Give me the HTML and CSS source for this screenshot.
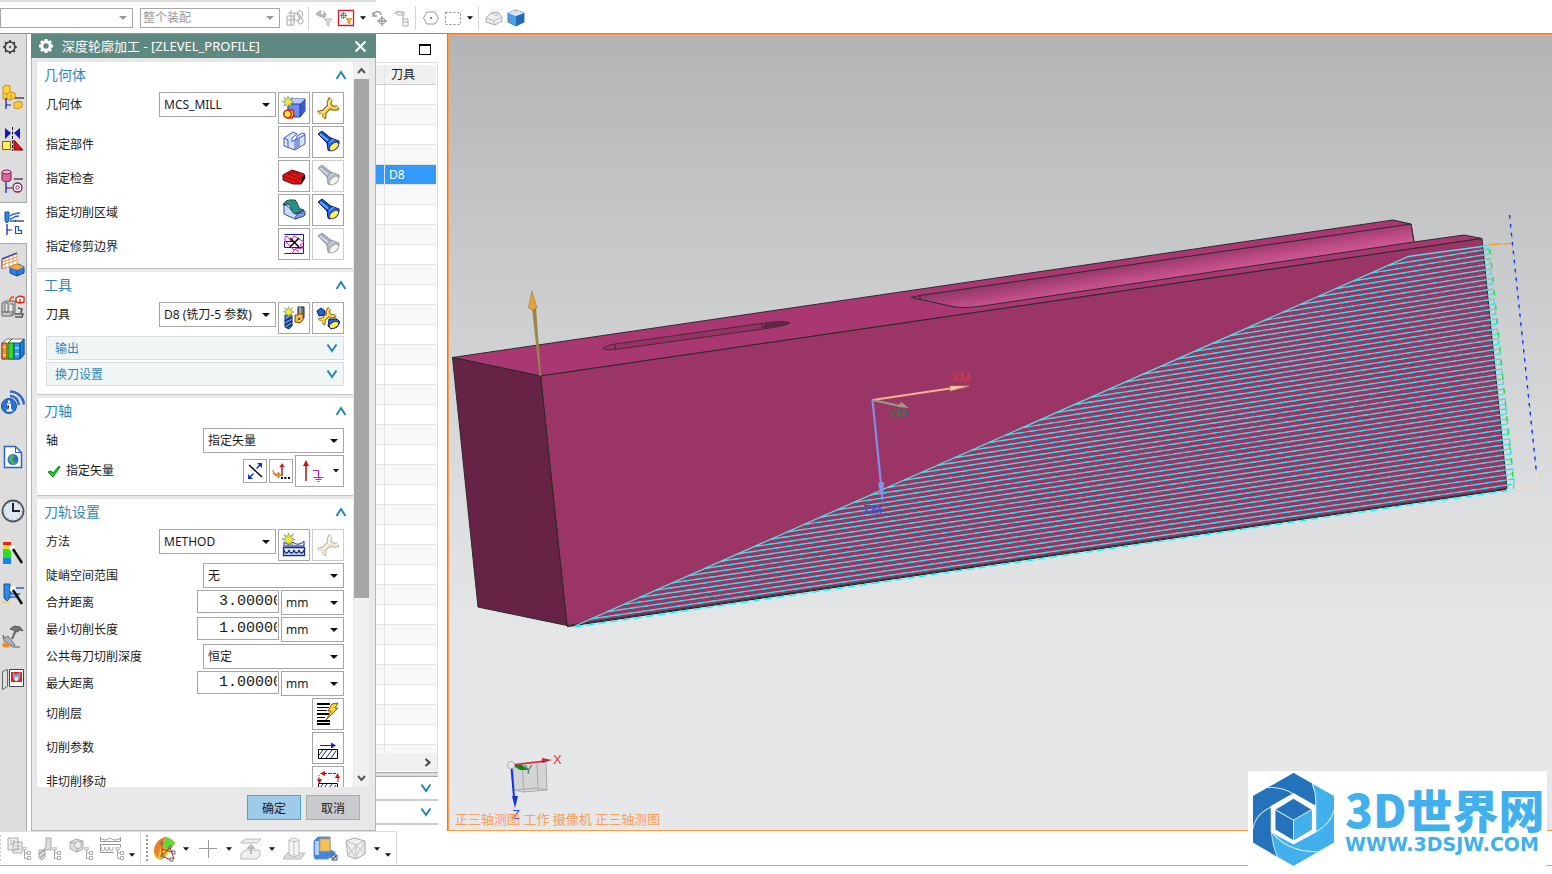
FILE: index.html
```
<!DOCTYPE html>
<html lang="zh-CN">

<head>
  <meta charset="UTF-8" />
  <meta name="viewport" content="width=device-width, initial-scale=1.0" />
  <title>深度轮廓加工</title>
  <link rel="stylesheet" href="styles.css">
</head>

<body>
  <!-- shared icons -->
  <svg class="defs" width="0" height="0">
    <symbol id="up" viewBox="0 0 12 10"><path d="M1.5 9 6 2l4.500 7" fill="none" stroke="#2587b8" stroke-width="2"/></symbol>
    <symbol id="down" viewBox="0 0 12 10"><path d="M1.500 1.500 6 8l4.500-6.500" fill="none" stroke="#2587b8" stroke-width="2"/></symbol>
    <symbol id="caret" viewBox="0 0 7 4"><path d="M0 0h7L3.500 4z" fill="#111"/></symbol>
    <symbol id="torch" viewBox="0 0 24 24">
      <path d="M2 4 6 1l10 8-4 5z" fill="#1750c4" stroke="#0a1a6a"/>
      <path d="M4 4l10 8" stroke="#69b4ff" stroke-width="2"/>
      <path d="M15 8l8 3v3l-9 7-2-1-1-7z" fill="#2469dd" stroke="#0a1a6a"/>
      <path d="M13 13l5-4" stroke="#7dc0ff"/>
      <ellipse cx="18" cy="16.500" rx="5.500" ry="3.200" transform="rotate(-40 18 16.500)" fill="#fff04a" stroke="#26307a"/>
    </symbol>
    <symbol id="wrench" viewBox="0 0 24 24">
      <g fill="none" stroke="#7a5a10">
        <path d="M6 18 14 10" stroke-width="5.500"/>
        <path d="M15 3a4.500 4.500 0 1 0 7 8" stroke-width="5"/>
        <path d="M2.500 17a3.500 3.500 0 1 1 5 5" stroke-width="4"/>
      </g>
      <g fill="none" stroke="#ffd33c">
        <path d="M6 18 14 10" stroke-width="3.500"/>
        <path d="M15 3.500a4.500 4.500 0 1 0 6.500 7.500" stroke-width="3"/>
        <path d="M3 17a3 3 0 1 1 4.500 4.500" stroke-width="2.200"/>
      </g>
      <path d="M6 17 13 10l-1-4 2-2" fill="none" stroke="#fff6b8"/>
    </symbol>
    <symbol id="spark" viewBox="0 0 12 12">
      <path d="M6 0l1 3.500L10.500 1 8.500 4.500 12 6 8.500 7.500 10 11 6.800 8.800 5.500 12 4.600 8.500 1.500 10 3.500 7 0 5.500 3.700 4.700 2 1.500 5 3.500z" fill="#ffe920" stroke="#3a7a9a" stroke-width=".5"/>
    </symbol>
    <symbol id="tree" viewBox="0 0 9 13"><path d="M1 0h3v3H1zM2.500 3v8.500H6M2.500 6H6M5.500 4.500h3v3h-3zM5.500 9.500h3v3h-3z" fill="#fff" stroke="#aaa"/></symbol>
  </svg>

  <header class="selbar">
    <select class="combo filter" aria-label="类型过滤器"><option></option></select>
    <select class="combo scope" aria-label="选择范围"><option>整个装配</option></select>
    <button class="tb" aria-label="装配"><svg width="18" height="18" viewBox="0 0 18 18" fill="none" stroke="#aaa"><path d="M5 1v16M2 4h7M1 7h7v9H1zM1 11h7"/><ellipse cx="11" cy="8" rx="3" ry="4"/><ellipse cx="14" cy="5" rx="2.500" ry="3.500"/><ellipse cx="14.500" cy="12" rx="2.500" ry="3"/></svg></button>
    <span class="sep"></span>
    <button class="tb" aria-label="重置过滤器"><svg width="18" height="18" viewBox="0 0 18 18"><path d="M6 1 1 5l5 3V6c4 0 4-2 2-4l3 3-1 3-3 1" fill="#bbb" stroke="#aaa"/><path d="M9 10h8l-3 3v4l-2-1v-3z" fill="#ddd" stroke="#bbb"/></svg></button>
    <button class="tb" aria-label="过滤器"><svg width="18" height="18" viewBox="0 0 18 18"><path d="M1.500 1.500h15v15h-15z" fill="#fff" stroke="#c8202c" stroke-width="1.300"/><path d="M6.500 3v7M3 6.500h7M4.500 4.500h4v4h-4z" fill="none" stroke="#766" stroke-width=".8"/><path d="M9 9.500h6l-2 2.500v3l-2-1v-2z" fill="#f7a823" stroke="#c8801a" stroke-width=".6"/></svg></button>
    <button class="more" aria-label="更多"><svg width="6" height="4"><use href="#caret"/></svg></button>
    <button class="tb" aria-label="旋转"><svg width="18" height="18" viewBox="0 0 18 18" fill="none" stroke="#999"><path d="M2 3v4h4M3 6c1-5 7-4 7 0M11 7v10M6 12h10" stroke-width="1.300"/><circle cx="11" cy="12" r="3"/></svg></button>
    <button class="tb" aria-label="选择对象"><svg width="18" height="18" viewBox="0 0 18 18" fill="none" stroke="#aaa"><path d="M1 5c3-4 6-3 9 0M4 3h7v3H4zM10 6v4M10 10h5v7h-5zM10 13h5"/></svg></button>
    <span class="sep"></span>
    <button class="tb" aria-label="捕捉点"><svg width="18" height="18" viewBox="0 0 18 18"><path d="M5 3h8l3.500 6L13 15H5L1.500 9z" fill="none" stroke="#999"/><circle cx="9" cy="9" r="1.200" fill="#888"/></svg></button>
    <button class="tb" aria-label="矩形选择"><svg width="18" height="18" viewBox="0 0 18 18"><path d="M1.500 3.500h15v12h-15z" fill="none" stroke="#888" stroke-dasharray="2 2"/></svg></button>
    <button class="more" aria-label="更多"><svg width="6" height="4"><use href="#caret"/></svg></button>
    <span class="sep"></span>
    <button class="tb" aria-label="隐藏边"><svg width="18" height="18" viewBox="0 0 18 18"><path d="M1 9l5-5 7-1 4 5v4l-7 4-9-3z" fill="#eee" stroke="#aaa"/><path d="M1 9l8 3 8-4M9 12v4M6 4l6 3 1-4" fill="none" stroke="#bbb"/></svg></button>
    <button class="tb" aria-label="着色"><svg width="18" height="18" viewBox="0 0 18 18"><path d="M1 4l8-3 8 3v9l-8 4-8-4z" fill="#4ba0e6" stroke="#3c7fc0"/><path d="M9 7l8-3v9l-8 4z" fill="#2468b8"/><path d="M1 4l8-3 8 3-8 3z" fill="#d7ecff"/><path d="M9 1v3M1 13l5-3" stroke="#e06a5a" stroke-dasharray="1 1"/></svg></button>
  </header>

  <main>
    <nav class="resbar">
      <button class="res gearbtn" aria-label="资源条选项"><svg width="16" height="16" viewBox="0 0 16 16"><circle cx="8" cy="8" r="5" fill="none" stroke="#333" stroke-width="1.500"/><circle cx="8" cy="8" r="1" fill="#333"/><path d="M8 1v2M8 13v2M1 8h2M13 8h2M3 3l1.500 1.500M11.500 11.500 13 13M3 13l1.500-1.500M11.500 4.500 13 3" stroke="#333" stroke-width="1.500"/></svg></button>
      <button class="res" aria-label="装配导航器"><svg width="26" height="26" viewBox="0 0 26 26"><path d="M3 3l3-2 4 1v6l5 1v5l-4 2-8-1z" fill="#ffd23a" stroke="#c8901c"/><path d="M3 9l4 1v5M7 10l3-2M11 10v5" fill="none" stroke="#c8901c"/><path d="M6 14v11M6 21h5" stroke="#1414b0" stroke-width="1.200"/><path d="M15 14h9" stroke="#000"/><path d="M14 19l4-2 4 1v5l-4 2-4-1z" fill="#ffc83a" stroke="#c8901c"/></svg></button>
      <button class="res" aria-label="约束导航器"><svg width="26" height="26" viewBox="0 0 26 26"><path d="M5 2v11l6-6zM20 2v11l-6-6z" fill="#1414c8"/><path d="M12.500 1v24" stroke="#111" stroke-dasharray="3 1.500"/><path d="M2.500 15.500h8v8h-8z" fill="#ffee58" stroke="#806010"/><path d="M14 24V14l9 10z" fill="#d8141c" stroke="#7a0a0a"/></svg></button>
      <button class="res" aria-label="部件导航器"><svg width="26" height="26" viewBox="0 0 26 26"><path d="M2 4v8c1 2 8 2 9 0V4z" fill="#d86a9a" stroke="#802050"/><ellipse cx="6.500" cy="4" rx="4.500" ry="2" fill="#f0b0cc" stroke="#802050"/><path d="M6 14v11M6 20h6" stroke="#1414b0" stroke-width="1.200"/><path d="M14 11h9" stroke="#000"/><circle cx="17.500" cy="19.500" r="4.500" fill="#fff" stroke="#8a1c4c" stroke-width="1.300"/><circle cx="17.500" cy="19.500" r="1.700" fill="none" stroke="#8a1c4c"/></svg></button>
      <button class="res current" aria-label="工序导航器"><svg width="26" height="26" viewBox="0 0 26 26"><path d="M4 2h4v9l-2 2-2-2z" fill="#2c8ae0" stroke="#1450a0"/><path d="M9 9c4 0 2-3 9-3M9 6c4-3 4-2 10-3M9 11h6" fill="none" stroke="#2a64c8" stroke-width="1.300"/><path d="M6 14v11M6 20h5" stroke="#1414b0" stroke-width="1.200"/><path d="M14 11h9" stroke="#000"/><path d="M14.500 16.500h3v4h3v3h-6z" fill="#fff" stroke="#1a50c0" stroke-width="1.200"/></svg></button>
      <button class="res" aria-label="加工特征导航器"><svg width="26" height="26" viewBox="0 0 26 26"><path d="M2 7l15-6v11L2 17z" fill="#fff" stroke="#e0a860"/><path d="M2 10l15-5M2 13l15-5M5 6v11M9 4v12M13 3v11" stroke="#e89a48"/><path d="M2 7l15-6" stroke="#4040c0" stroke-width="1.500"/><path d="M2 17V7" stroke="#7a50a0"/><path d="M10 15l8-3 6 3v6l-7 3-7-3z" fill="#2c7ce8" stroke="#174a9a"/><path d="M9 15l8-3 7 3-7 3z" fill="#ffa830"/><path d="M17 18v6" stroke="#174a9a"/></svg></button>
      <button class="res" aria-label="机床导航器"><svg width="26" height="26" viewBox="0 0 26 26"><path d="M2 9l4-2h9v13l-3 2H2z" fill="#c8c8c8" stroke="#666"/><path d="M5 9v9h3V9zM10 10h3v10h-3M2 18h12" fill="#eee" stroke="#666"/><path d="M15 20h8l-1 3h-7M18 14l4 1-1 4" fill="none" stroke="#555" stroke-width="1.500"/><path d="M16 4l4-2 4 1v5l-4 1-4-1zM20 5v4" fill="#fff" stroke="#d82018" stroke-width="1.300"/><path d="M14 3c-4 0-4 2-4 5" fill="none" stroke="#e86020" stroke-width="1.800"/></svg></button>
      <button class="res" aria-label="重用库"><svg width="26" height="26" viewBox="0 0 26 26"><path d="M2 7l5-4h17v16l-5 4H2z" fill="#fff" stroke="#777"/><path d="M2 7h5v16H2z" fill="#e89030" stroke="#7a4510"/><path d="M8 7h6v16H8zM8 7l4-4" fill="#3ad030" stroke="#117010"/><path d="M14 7h6v16h-6z" fill="#2c9ae8" stroke="#0d5090"/><path d="M20 7l4-4v16l-4 4z" fill="#1a80e0" stroke="#0d5090"/><path d="M3 11h3M15 12h4M3 19h3M15 18h4" stroke="#fff"/></svg></button>
      <button class="res spaced" aria-label="HD3D 工具"><svg width="26" height="26" viewBox="0 0 26 26"><path d="M10 6c5 0 8 3 9 9M10 1.500c7 0 13 5 14 13" fill="none" stroke="#3468c8" stroke-width="2.500"/><circle cx="9" cy="16" r="7.500" fill="#2a74d8" stroke="#184a98"/><path d="M9 10.500v2.500M7 14.500h3V20M6.500 20.500h6" stroke="#fff" stroke-width="2"/></svg></button>
      <button class="res spaced" aria-label="浏览器"><svg width="26" height="26" viewBox="0 0 26 26"><path d="M4.500 2.500h11l6 6v15h-17z" fill="#fff" stroke="#2a64c8" stroke-width="1.500"/><path d="M15.500 2.500v6h6" fill="none" stroke="#2a64c8"/><circle cx="13" cy="15.500" r="5.500" fill="#2a74c8"/><path d="M9 13c2-4 6-2 5 0s-2 2-1 4 3 0 4 1l-3 3c-2-1-3-3-5-4z" fill="#52b052"/></svg></button>
      <button class="res spaced" aria-label="历史记录"><svg width="26" height="26" viewBox="0 0 26 26"><circle cx="13" cy="13" r="10.500" fill="#dce8f4" stroke="#555" stroke-width="1.800"/><circle cx="13" cy="13" r="8.500" fill="none" stroke="#8aa" stroke-dasharray="1 3.450"/><path d="M13 5v8h7" fill="none" stroke="#223" stroke-width="2"/></svg></button>
      <button class="res" aria-label="系统材料"><svg width="26" height="26" viewBox="0 0 26 26"><path d="M3 2h8v5H3z" fill="#f02018"/><path d="M3 5h8v4H3z" fill="#ffd820"/><path d="M3 9h8v9H3z" fill="#28e020"/><path d="M3 18h8v6H3z" fill="#1880f0"/><circle cx="12" cy="8" r="3" fill="#fff"/><path d="M13 9l9 14" stroke="#111" stroke-width="2.500"/></svg></button>
      <button class="res" aria-label="加工向导"><svg width="26" height="26" viewBox="0 0 26 26"><path d="M4 2h6v14l-3 3-3-3z" fill="#2c8ae0" stroke="#1450a0"/><path d="M24 6H14l-4 6h9l-3 3H8" fill="none" stroke="#2a64c8" stroke-width="1.500"/><circle cx="13" cy="7" r="3" fill="#fff"/><path d="M13 8l9 14" stroke="#111" stroke-width="2.500"/><path d="M2 20h7" stroke="#f0d020" stroke-width="2" stroke-dasharray="2 1"/></svg></button>
      <button class="res" aria-label="工具"><svg width="26" height="26" viewBox="0 0 26 26"><path d="M10 5l4-3 6 1 3 4-3-1-3 2-4-2z" fill="#777" stroke="#444" stroke-width=".8"/><path d="M16 6l-4 9" stroke="#666" stroke-width="2"/><path d="M3 11l2 3 3-2 3 4 4 5-2 2-5-4-4-2z" fill="#aab4c0" stroke="#555" stroke-width=".8"/><ellipse cx="6" cy="21" rx="4" ry="2.500" fill="#f09020"/><path d="M10 21l4 2h6" stroke="#999" stroke-width="2" fill="none"/></svg></button>
      <button class="res" aria-label="角色"><svg width="26" height="26" viewBox="0 0 26 26"><path d="M2.500 5.500l5-2v17l-5 3z" fill="#ddd" stroke="#666"/><path d="M9.500 3.500h14v17h-14z" fill="#fff" stroke="#444"/><path d="M11 6h11v10H11z" fill="#e82020"/><path d="M13 6l3 3 4-3v6c-3 4-5 4-7 0z" fill="#58b0f0"/><circle cx="16.500" cy="13" r="2" fill="#ffe0c0"/></svg></button>
    </nav>

    <form class="dialog" onsubmit="return false">
      <div class="titlebar">
        <svg width="18" height="18" viewBox="0 0 18 18"><circle cx="9" cy="9" r="4.200" fill="none" stroke="#fff" stroke-width="3"/><path d="M9 2v2M9 14v2M2 9h2M14 9h2M4 4l1.500 1.500M12.500 12.500 14 14M4 14l1.500-1.500M12.500 5.500 14 4" stroke="#fff" stroke-width="3"/></svg>
        <h1>深度轮廓加工 - [ZLEVEL_PROFILE]</h1>
        <button class="close" aria-label="关闭"><svg width="13" height="13" viewBox="0 0 13 13"><path d="M1.500 1.500l10 10M11.500 1.500l-10 10" stroke="#fff" stroke-width="2"/></svg></button>
      </div>

      <div class="body">
        <div class="groups">
          <section>
            <h2>几何体 <svg width="12" height="10"><use href="#up"/></svg></h2>
            <div class="row">
              <label for="geometry">几何体</label>
              <select id="geometry" class="combo mid-size"><option>MCS_MILL</option></select>
              <button class="ib" aria-label="新建几何体"><svg width="24" height="24" viewBox="0 0 24 24"><path d="M6 8l4-5h13v12l-5 6H6z" fill="#6f8df0" stroke="#2038a0"/><path d="M6 8h12l5-5H10z" fill="#b8ccff"/><path d="M18 8l5-5v12l-5 6z" fill="#3c58d0"/><path d="M6 8h12v13" fill="none" stroke="#2038a0"/><path d="M5 14h6l1 5-2 3H5" fill="#ffe020" stroke="#e02010" stroke-width="1.500"/><circle cx="5.500" cy="18" r="3.800" fill="#ffe83a" stroke="#e02010" stroke-width="1.500"/><use href="#spark" width="12" height="12"/></svg></button>
              <button class="ib" aria-label="编辑几何体"><svg width="24" height="24"><use href="#wrench"/></svg></button>
            </div>
            <div class="row low">
              <label for="part">指定部件</label>
              <button class="ib" id="part"><svg width="24" height="24" viewBox="0 0 24 24"><path d="M2 8l9-6 4 2-5 4v4l5-4V6l5-3 3 1v10l-10 6L2 16z" fill="#d5e4ff" stroke="#4a58c0"/><path d="M2 8l4 2v7M13 10l10-5M13 10v10M17 8v9" fill="none" stroke="#4a58c0"/><path d="M14 10l3-2v9l-3 2z" fill="#8898d8"/></svg></button>
              <button class="ib" aria-label="显示部件"><svg width="24" height="24"><use href="#torch"/></svg></button>
            </div>
            <div class="row low">
              <label for="check">指定检查</label>
              <button class="ib" id="check"><svg width="24" height="24" viewBox="0 0 24 24"><path d="M1 11l9-5 12 4 1 4-4 6-8 0-10-4z" fill="#e01414" stroke="#5a0404"/><path d="M1 12l11 4 11-4M12 16l7 4M6 10l5-2 6 2-4 3z" fill="none" stroke="#8a0808" stroke-width=".8"/><path d="M20 13l3-2v3l-4 6z" fill="#300"/></svg></button>
              <button class="ib" aria-label="显示检查" disabled><svg width="24" height="24"><use href="#torch"/></svg></button>
            </div>
            <div class="row low">
              <label for="area">指定切削区域</label>
              <button class="ib" id="area"><svg width="24" height="24" viewBox="0 0 24 24"><path d="M2 7v9l11 5 10-4v-4l-9 3-10-9z" fill="#c8daff" stroke="#3848a8"/><path d="M1 7c3-6 7-5 12-5 4 4 2 9 9 10l-9 4c-5-2-3-9-8-10z" fill="#2a9088" stroke="#0c4844"/><path d="M13 21c0-4 6-8 10-5l-1 2z" fill="#88a0e8" stroke="#3848a8"/></svg></button>
              <button class="ib" aria-label="显示切削区域"><svg width="24" height="24"><use href="#torch"/></svg></button>
            </div>
            <div class="row low">
              <label for="trim">指定修剪边界</label>
              <button class="ib" id="trim"><svg width="24" height="24" viewBox="0 0 24 24" fill="none"><path d="M2.500 2.500h19v19h-19M21.500 15.500h-19v-6h9" stroke="#1414b8"/><path d="M3 5l2-1 4 5 3-5 10 6-4 3 4 3-9 1-3 5M3 5v4l9 9M13 17l4 3" stroke="#d020c8"/><path d="M8 6l9 9M17 6l-9 9" stroke="#000" stroke-width="1.500"/></svg></button>
              <button class="ib" aria-label="显示修剪边界" disabled><svg width="24" height="24"><use href="#torch"/></svg></button>
            </div>
          </section>

          <section>
            <h2>工具 <svg width="12" height="10"><use href="#up"/></svg></h2>
            <div class="row">
              <label for="tool">刀具</label>
              <select id="tool" class="combo mid-size"><option>D8 (铣刀-5 参数)</option></select>
              <button class="ib" aria-label="新建刀具"><svg width="24" height="24" viewBox="0 0 24 24"><path d="M3 9h7v11l-3 3-4-2z" fill="#5c98e8" stroke="#16286a"/><path d="M3 15l7-4M3 19l7-4M5 22l5-4" stroke="#16286a" stroke-width="1.500"/><path d="M16 1h6v11h-6z" fill="#777" stroke="#222"/><path d="M18 1v10" stroke="#ddd"/><path d="M13 9h3v-1h5v6l-3 3-5-1z" fill="#f2c040" stroke="#7a4a10"/><circle cx="17" cy="13" r="1" fill="#400"/><use href="#spark" x="1" width="11" height="12"/></svg></button>
              <button class="ib" aria-label="编辑刀具"><svg width="24" height="24" viewBox="0 0 24 24"><path d="M1 5l4-3 4 3v4l-6 1z" fill="#2463d0" stroke="#0a1a6a"/><use href="#wrench" width="22" height="20"/><path d="M13 13l8 0 3 3-3 5-6 2-3-3z" fill="#2463d0" stroke="#0a1a6a"/><ellipse cx="18" cy="19" rx="5" ry="3" transform="rotate(-25 18 19)" fill="#ffec40" stroke="#26307a"/></svg></button>
            </div>
            <button class="subgroup">输出 <svg width="12" height="10"><use href="#down"/></svg></button>
            <button class="subgroup">换刀设置 <svg width="12" height="10"><use href="#down"/></svg></button>
          </section>

          <section>
            <h2>刀轴 <svg width="12" height="10"><use href="#up"/></svg></h2>
            <div class="row">
              <label for="axis">轴</label>
              <select id="axis" class="combo wide"><option>指定矢量</option></select>
            </div>
            <div class="row mid">
              <svg class="tick" width="14" height="14" viewBox="0 0 14 14"><path d="M1 8l3-1 2 2 6-7 1 1-7 10z" fill="#1ed02a" stroke="#0a8014"/></svg>
              <label for="vector">指定矢量</label>
              <button class="ib small" aria-label="反向"><svg width="18" height="18" viewBox="0 0 18 18"><path d="M3 3l13 12" stroke="#000" stroke-width="1.400"/><path d="M2 17v-5l2 2 3-3 1 1-3 3 2 2zM16 1v5l-2-2-3 3-1-1 3-3-2-2z" fill="#1430d0"/></svg></button>
              <button class="ib small" aria-label="矢量对话框"><svg width="18" height="18" viewBox="0 0 18 18"><path d="M10 14V4" stroke="#a01818" stroke-width="1.400"/><path d="M10 1l2.500 4h-5z" fill="#d01818"/><path d="M1 8c1 4 3 4 5 4v-2l3 3-3 3v-2c-4 0-5-2-5-6z" fill="#f09020" stroke="#a05808" stroke-width=".5"/><path d="M9 16h2M12.500 16h2M16 16h2" stroke="#000" stroke-width="2"/></svg></button>
              <button class="ib vector" id="vector"><svg width="40" height="24" viewBox="0 0 40 24"><path d="M6 22V4" stroke="#a01818" stroke-width="1.500"/><path d="M6 1l3 6H3z" fill="#d01010"/><path d="M13 11.500h5.500v8M13.500 18.500h10M15.500 20.500h6M17.500 22.500h2" fill="none" stroke="#c01cc8"/><path d="M33 10h6l-3 3.500z" fill="#111"/></svg></button>
            </div>
          </section>

          <section>
            <h2>刀轨设置 <svg width="12" height="10"><use href="#up"/></svg></h2>
            <div class="row">
              <label for="method">方法</label>
              <select id="method" class="combo mid-size"><option>METHOD</option></select>
              <button class="ib" aria-label="新建方法"><svg width="24" height="24" viewBox="0 0 24 24"><path d="M2 13V9c4 3 6 3 9 0 3 3 7 3 11-1v5z" fill="#d8ecff" stroke="#1a2a8a"/><path d="M1.500 14.500h21v8h-21z" fill="#e4f2ff" stroke="#1a2a8a" stroke-width="1.300"/><path d="M2 17c1 4 4 4 5 0 1 4 4 4 5 0 1 4 4 4 5 0 1 4 4 4 5 0" fill="none" stroke="#1a2a8a" stroke-width="1.300"/><use href="#spark" width="13" height="13"/></svg></button>
              <button class="ib" aria-label="编辑方法" disabled><svg width="24" height="24"><use href="#wrench"/></svg></button>
            </div>
            <div class="row">
              <label for="steep">陡峭空间范围</label>
              <select id="steep" class="combo wide"><option>无</option></select>
            </div>
            <div class="row">
              <label for="merge">合并距离</label>
              <input id="merge" type="text" value="3.00000">
              <select class="combo unit" aria-label="单位"><option>mm</option></select>
            </div>
            <div class="row">
              <label for="mincut">最小切削长度</label>
              <input id="mincut" type="text" value="1.00000">
              <select class="combo unit" aria-label="单位"><option>mm</option></select>
            </div>
            <div class="row">
              <label for="depth">公共每刀切削深度</label>
              <select id="depth" class="combo wide"><option>恒定</option></select>
            </div>
            <div class="row">
              <label for="maxdist">最大距离</label>
              <input id="maxdist" type="text" value="1.00000">
              <select class="combo unit" aria-label="单位"><option>mm</option></select>
            </div>
            <div class="row mid">
              <label for="levels">切削层</label>
              <button class="ib" id="levels"><svg width="24" height="24" viewBox="0 0 24 24"><path d="M1 2h13M1 12h12M1 19h13M1 22h13" stroke="#000" stroke-width="2"/><path d="M1 5.500h12M1 8.500h10M1 15.500h8" stroke="#000"/><path d="M16 2l6-1-3 5h3L10 18l5-9h-3z" fill="#ffd030" stroke="#80601a"/></svg></button>
            </div>
            <div class="row mid">
              <label for="cutting">切削参数</label>
              <button class="ib" id="cutting"><svg width="24" height="24" viewBox="0 0 24 24"><path d="M4 9.500h12" stroke="#1420c8"/><path d="M15 6.500l5 3-5 3z" fill="#1420c8"/><path d="M2.500 13.500h19v9h-19z" fill="#fff" stroke="#000"/><path d="M3 19l4-5M5 22l6-8M10 22l6-8M15 22l5-7" stroke="#222a60"/></svg></button>
            </div>
            <div class="row mid">
              <label for="noncutting">非切削移动</label>
              <button class="ib" id="noncutting"><svg width="24" height="24" viewBox="0 0 24 24"><path d="M3 11V5M7 3.500h13M22 12V6" stroke="#d01010" stroke-dasharray="4 1"/><path d="M1 9h5l-2.500 5zM4 3.500l5-2.500v5zM19 8h5l-2.500-5z" fill="#d01010"/><path d="M2.500 13.500h19v9h-19z" fill="#fff" stroke="#000"/><path d="M3 19l4-5M5 22l6-8M10 22l6-8M15 22l5-7" stroke="#222a60"/></svg></button>
            </div>
          </section>
        </div>
        <div class="scrollbar">
          <svg width="15" height="17" viewBox="0 0 15 17"><path d="M4 11l3.500-4 3.500 4" fill="none" stroke="#555" stroke-width="2"/></svg>
          <div class="thumb"></div>
          <svg width="15" height="17" viewBox="0 0 15 17"><path d="M4 6l3.500 4L11 6" fill="none" stroke="#555" stroke-width="2"/></svg>
        </div>
      </div>

      <div class="actions">
        <button class="ok">确定</button>
        <button>取消</button>
      </div>
    </form>

    <aside class="navigator">
      <button class="maximize" aria-label="最大化"></button>
      <div class="tablebox">
        <table>
          <thead><tr><th></th><th>刀具</th></tr></thead>
          <tbody id="ops"></tbody>
        </table>
      </div>
      <div class="hscroll"><svg width="8" height="9" viewBox="0 0 8 9"><path d="M1.500 1l4 3.500-4 3.500" fill="none" stroke="#444" stroke-width="2"/></svg></div>
      <div class="splitter"></div>
      <button class="pane" aria-label="相关性"><svg width="12" height="10"><use href="#down"/></svg></button>
      <button class="pane" aria-label="细节"><svg width="12" height="10"><use href="#down"/></svg></button>
    </aside>

    <div class="viewport">
      <svg class="scene" viewBox="449 35 1103 795" preserveAspectRatio="xMinYMin">
        <defs>
          <linearGradient id="channel" gradientUnits="userSpaceOnUse" x1="1160" y1="259" x2="1164" y2="284">
            <stop offset="0" stop-color="#96386a"/>
            <stop offset=".6" stop-color="#c04d86"/>
            <stop offset="1" stop-color="#d75c98"/>
          </linearGradient>
        </defs>
        <!-- workpiece -->
        <g stroke="#2b2b2b" stroke-linejoin="round">
          <path d="M452.500 357.500 1393 220l18 4 3 18 50-7 18 3.500L540.500 376z" fill="#a93771"/>
          <path d="M540.500 376 1482 238.500 1507 488.500 567 625.500z" fill="#9b3566"/>
          <path d="M452.500 357.500 540.500 376 567 625.500 478 607z" fill="#662345"/>
          <path d="M911 297.500l9-2L1411 224l3 18L979 306.500q-14 2-24 .5z" fill="url(#channel)"/>
          <path d="M920 295.500v4" fill="none"/>
          <path d="M603 348q4-3 12-4l150-21q20-3 25 0-4 3-27 6L615 349.500q-12 1-12-1.500z" fill="#963364" stroke-width=".8"/>
          <path d="M765 323q20-3 25 0-4 3-28 6z" fill="#612544" stroke="none"/>
          <path d="M615 344v5.500M762 323.500v5" fill="none"/>
        </g>
        <path d="M567 626.500 1506 489.500" stroke="#2b2b2b" stroke-width="1.500"/>
        <!-- tool path, filled in by the script -->
        <path id="passes" fill="none" stroke="#6fcdd2" stroke-width="1.200"/>
        <path id="passes-dash" fill="none" stroke="#00f4f8" stroke-width="1.200" stroke-dasharray="6 6"/>
        <path d="M575 626 1408.500 256.500 1489 245.500" fill="none" stroke="#55dfe4" stroke-width="1.300"/>
        <path d="M575 627 1513 490" stroke="#a8f2f4" stroke-width="2"/>
        <path d="M575 627 1513 490" stroke="#00f0f4" stroke-dasharray="7 5"/>
        <path d="M1490 249 1514 489" stroke="#22e030" stroke-width="1.300" stroke-dasharray="5 9"/>
        <path d="M1489 244.500 1512 243.500" stroke="#ffa01e" stroke-width="1.500" stroke-dasharray="12 2"/>
        <path d="M1509.500 215 1536.500 473" stroke="#8296f0" stroke-width="1.300" stroke-dasharray="5 4"/>
        <path d="M1509.500 215 1536.500 473" stroke="#1430e0" stroke-width="1.300" stroke-dasharray="3 6"/>
        <path d="M1537 474v14h-23" fill="none" stroke="#f4dcd4" stroke-width="1.300" stroke-dasharray="8 2"/>
        <!-- tool axis -->
        <path d="M539.500 376 532 308h4l5 68z" fill="#9c8740"/>
        <path d="M532 291l-3.500 17 4 2 4.500-2z" fill="#e8a23c" stroke="#8a6a28" stroke-width=".5"/>
        <!-- MCS -->
        <path d="M872.500 400 950 388.500" stroke="#f4b090" stroke-width="2"/>
        <path d="M969 386l-19 0v5z" fill="#f4c8a0" stroke="#d08a70" stroke-width=".6"/>
        <path d="M872.500 400 900 406" stroke="#93a183" stroke-width="2"/>
        <path d="M909 408l-8-6-3 5z" fill="#93a183"/>
        <path d="M872.500 400 881 484" stroke="#7f90e6" stroke-width="2.200"/>
        <path d="M882.500 502l-4.500-19 6-1z" fill="#7d98f2"/>
        <text x="951" y="382" class="axis red">XM</text>
        <text x="888" y="418" class="axis green">YM</text>
        <text x="863" y="514" class="axis blue">ZM</text>
        <!-- view triad -->
        <path d="M513 766l9-2 24-2 1 28-24 2-9-2zM522 764l2 28M537 763l1 27M514 790l23-2 10 2" fill="#cbccce" fill-opacity=".7" stroke="#aaa"/>
        <path d="M511 765 545 761" stroke="#d02830" stroke-width="1.500"/>
        <path d="M552 760l-10-2v5z" fill="#c02830"/>
        <path d="M512 765l10 0 7 5-9 0z" fill="#168018"/>
        <path d="M511.500 768 514 797" stroke="#1430e0" stroke-width="2"/>
        <path d="M515 808l-3-12h6z" fill="#1430e0"/>
        <circle cx="511" cy="765" r="3.800" fill="#e4e4e4" stroke="#999" stroke-width=".6"/>
        <text x="553" y="764" class="axis red">X</text>
        <text x="524" y="774" class="axis dim">Y</text>
        <text x="512" y="819" class="axis blue">Z</text>
      </svg>
      <p class="viewname">正三轴测图 工作 摄像机 正三轴测图</p>
    </div>
  </main>

  <footer class="bottombar">
    <div class="strip">
      <span class="grip"></span>
      <button class="bb" aria-label="创建程序"><svg width="26" height="26" viewBox="0 0 26 26"><path d="M2 2h10v12H2zM7 6h9v11H7z" fill="#eee" stroke="#aaa"/><path d="M4 5h6M4 8h6M9 10h5M9 13h5" stroke="#aaa" stroke-dasharray="2 1"/><use href="#tree" x="16" y="11" width="9" height="13"/></svg></button>
      <button class="bb" aria-label="创建刀具"><svg width="26" height="26" viewBox="0 0 26 26"><path d="M9 2h5v12H7l2-4zM2 14h6v7l-3 3-3-2z" fill="#ddd" stroke="#aaa"/><path d="M2 18l6-4M3 22l5-4" stroke="#888"/><use href="#tree" x="15" y="11" width="9" height="13"/></svg></button>
      <button class="bb" aria-label="创建几何体"><svg width="26" height="26" viewBox="0 0 26 26"><path d="M2 6l6-3 7 2v8l-6 3-7-3z" fill="#ddd" stroke="#aaa"/><path d="M2 6l7 2v8M9 8l6-3" fill="none" stroke="#aaa"/><circle cx="10" cy="9" r="3.500" fill="#eee" stroke="#aaa"/><use href="#tree" x="16" y="11" width="9" height="13"/></svg></button>
      <button class="bb" aria-label="创建方法"><svg width="26" height="26" viewBox="0 0 26 26" fill="none" stroke="#999"><path d="M1.500 1v4.500h20V1M1 2q5 4 10 0 5 4 11 0M1.500 8.500v8h13M1 8.500h20.500v3M2 11c1 5 4 5 4 0 1 5 4 5 4 0 1 5 4 5 4 0"/><use href="#tree" x="16" y="11" width="9" height="13"/></svg></button>
      <button class="last" aria-label="工具条选项"><svg width="6" height="4"><use href="#caret"/></svg></button>
      <span class="rule"></span>
      <span class="grip dark"></span>
      <button class="bb" aria-label="分析"><svg width="26" height="26" viewBox="0 0 26 26"><path d="M2 16C2 8 7 2 14 1c4 1 7 3 9 6l-8 12-5 5c-5 0-8-3-8-8z" fill="#f0c030"/><path d="M2 16C2 8 7 2 14 1l-6 12-2 9z" fill="#e88030"/><path d="M14 1c4 1 7 3 9 6l-6 8-6-4z" fill="#60d83a"/><path d="M10 7v13l8-9 4 12M10 13l10 3M10 20l9 4" fill="none" stroke="#c02818"/><path d="M9 6h2v2H9zM9 19h2v2H9zM20 15h3v3h-3zM18 22h3v3h-3zM17 10h2v2h-2z" fill="#fff" stroke="#444" stroke-width=".8"/></svg></button>
      <button class="more" aria-label="更多"><svg width="6" height="4"><use href="#caret"/></svg></button>
      <button class="bb" aria-label="点"><svg width="26" height="26" viewBox="0 0 26 26"><path d="M13.500 4v18M4 12.500h18" stroke="#999"/></svg></button>
      <button class="more" aria-label="更多"><svg width="6" height="4"><use href="#caret"/></svg></button>
      <button class="bb" aria-label="基准平面"><svg width="26" height="26" viewBox="0 0 26 26"><path d="M3 6l5-3h15l-4 4H3zM3 17l5-3h13l1 2v4l-4 3H3z" fill="#eee" stroke="#bbb"/><path d="M13 18v-6h-3l3-3 3 3h-3" fill="none" stroke="#aaa" stroke-width="1.300"/></svg></button>
      <button class="more" aria-label="更多"><svg width="6" height="4"><use href="#caret"/></svg></button>
      <button class="bb" aria-label="拉伸"><svg width="26" height="26" viewBox="0 0 26 26"><path d="M2 23l4-6h18l-4 6z" fill="#ddd" stroke="#bbb"/><path d="M8 4v15q5 3 10 0V4q-5-4-10 0z" fill="#f4f4f4" stroke="#bbb"/><path d="M8 4q5 3 10 0M13 5v16" fill="none" stroke="#aaa" stroke-dasharray="2 1"/></svg></button>
      <button class="bb" aria-label="包容体"><svg width="26" height="26" viewBox="0 0 26 26"><path d="M2 5l4-4h12v13l5 2v3l-8 4H3l-1-3z" fill="#3f86dc" stroke="#5a90d0"/><path d="M3 5h4v14H3z" fill="#a8d0f8"/><path d="M8 3h10v12H8z" fill="#f8c058" stroke="#d8a050"/><path d="M20 19h5v5h-5z" fill="#fff" stroke="#3a4880"/><path d="M21 23l3-3" stroke="#3a4880" stroke-width="1.500"/></svg></button>
      <button class="bb" aria-label="小平面体"><svg width="26" height="26" viewBox="0 0 26 26"><path d="M3 5l8-3 11 3v13l-9 5-8-3z" fill="#eee" stroke="#aaa"/><path d="M3 5l10 4 9-4M13 9v14M4 8l9 14M5 19l8-9M13 20l9-13M14 10l8 8" fill="none" stroke="#bbb"/></svg></button>
      <button class="more" aria-label="更多"><svg width="6" height="4"><use href="#caret"/></svg></button>
      <button class="last" aria-label="工具条选项"><svg width="6" height="4"><use href="#caret"/></svg></button>
    </div>
  </footer>

  <div class="brand">
    <svg width="81" height="93" viewBox="39 39 242 278">
      <path d="M160 39 281 108V247L160 317 39 247V108z" fill="#41b0ec"/>
      <path d="M160 39 216 71Q228 100 225 138L160 178 97 222Q97 262 113 290L39 247V108z" fill="#2472bb"/>
      <path d="M160 99 228 138V216L160 253 92 216V138z" fill="#fff"/>
      <path d="M106 149 160 116 214 149V208L160 240 106 208z" fill="#2472bb"/>
      <path d="M160 180 214 149V208L160 240z" fill="#41b0ec"/>
      <path d="M106 149 160 180 214 149M160 180V240M84 83Q122 78 163 103M94 140Q46 162 39 205M226 216Q272 190 281 150M97 218Q145 276 232 274M216 71Q230 105 226 140M94 214Q98 262 113 290" fill="none" stroke="#cfe8fa" stroke-width="3"/>
    </svg>
    <div class="brand-text">
      <strong>3D世界网</strong>
      <span>WWW.3DSJW.COM</span>
    </div>
  </div>

  <script src="main.js"></script>
</body>

</html>
```
FILE: styles.css
```
* {
  box-sizing: border-box;
}
body {
  margin: 0;
  height: 100vh;
  padding-bottom: 8px;
  display: flex;
  flex-direction: column;
  position: relative;
  overflow: hidden;
  background: #fff;
  color: #1a1a1a;
  font-family: "Noto Sans", "Noto Sans CJK SC", sans-serif;
  font-size: 12px;
}
button, select, input {
  font: inherit;
  color: inherit;
  margin: 0;
  padding: 0;
  border-radius: 0;
}
button {
  border: none;
  background: none;
  display: flex;
  align-items: center;
  justify-content: center;
  flex: none;
}
svg {
  flex: none;
  display: block;
}
.defs {
  position: absolute;
}
main {
  flex: 1;
  min-height: 0;
  display: flex;
}

/* drop-downs */
.combo {
  appearance: none;
  flex: none;
  height: 25px;
  padding: 0 18px 0 4px;
  border: 1px solid #a6a6a6;
  background: #fff url("data:image/svg+xml,%3Csvg xmlns='http://www.w3.org/2000/svg' width='8' height='4'%3E%3Cpath d='M0 0h8L4 4z' fill='%23111'/%3E%3C/svg%3E") no-repeat right 5px center;
}
.mid-size { width: 117px; }
.wide { width: 141px; }
.unit { width: 63px; }

/* selection bar */
.selbar {
  height: 34px;
  flex: none;
  display: flex;
  align-items: center;
  padding-top: 2px;
  border-bottom: 1px solid #8e9094;
  background: linear-gradient(#ddd, #ddd) no-repeat 0 0 / 376px 2px;
}
.selbar .combo {
  height: 20px;
  padding-left: 2px;
  color: #9a9a9a;
  background-image: url("data:image/svg+xml,%3Csvg xmlns='http://www.w3.org/2000/svg' width='8' height='4'%3E%3Cpath d='M0 0h8L4 4z' fill='%23999'/%3E%3C/svg%3E");
}
.selbar .filter {
  width: 133px;
  margin-right: 7px;
}
.selbar .scope {
  width: 140px;
  margin-right: 4px;
}
.tb {
  width: 22px;
  height: 22px;
}
.more {
  width: 12px;
  height: 22px;
}
.sep {
  width: 1px;
  height: 24px;
  margin: 0 4px 0 2px;
  background: #d5d5d5;
}

/* resource bar */
.resbar {
  width: 27px;
  flex: none;
  margin-right: 4px;
  background: #ddd;
  border-right: 1px solid #a8a8a8;
}
.res {
  width: 26px;
  height: 42px;
}
.gearbtn {
  padding: 0 6px 16px 0;
}
.spaced {
  margin-top: 12px;
}
.current {
  width: 27px;
  background: #fff;
  border: solid #a8a8a8;
  border-width: 1px 0;
}

/* dialog */
.dialog {
  width: 345px;
  flex: none;
  display: flex;
  flex-direction: column;
  background: #e8e8e8;
  border: 1px solid #b4b4b4;
  border-top: none;
}
.titlebar {
  height: 24px;
  flex: none;
  margin: 0 -1px 4px;
  padding: 0 9px 0 6px;
  display: flex;
  align-items: center;
  background: #5e8983;
  color: #fff;
}
.titlebar h1 {
  flex: 1;
  margin: 0 0 0 7px;
  font-size: 13px;
  line-height: 24px;
  font-weight: normal;
}
.body {
  flex: 1;
  min-height: 0;
  display: flex;
  padding: 0 6px 0 5px;
}
.groups {
  flex: 1;
  margin-right: 1px;
  overflow: hidden;
}
section {
  display: flex;
  flex-direction: column;
  gap: 2px;
  padding: 0 9px 8px;
  margin-bottom: 3px;
  background: #fff;
  border-bottom: 1px solid #c4c4c4;
}
h2 {
  display: flex;
  justify-content: space-between;
  align-items: center;
  height: 26px;
  margin: 0 -3px 2px -2px;
  font-size: 14px;
  line-height: 26px;
  font-weight: normal;
  color: #2f86bd;
}
.row {
  display: flex;
  align-items: flex-start;
  gap: 2px;
}
.row label {
  flex: 1;
  height: 24px;
  line-height: 26px;
}
.row.mid label { line-height: 32px; }
.row.low label { line-height: 38px; }
.ib {
  width: 32px;
  height: 32px;
  border: 1px solid #a6a6a6;
  background: #fff;
}
.ib:disabled {
  border-color: #ccc;
}
.ib:disabled svg {
  filter: grayscale(.7);
  opacity: .45;
}
.ib.small {
  width: 24px;
  height: 24px;
  margin-top: 4px;
}
.ib.vector {
  width: 49px;
}
.tick {
  margin: 9px 3px 0 1px;
}
.row input {
  width: 82px;
  height: 23px;
  padding: 0 1px 0 21px;
  border: 1px solid #a6a6a6;
  background: #fff;
  font: 15px "Liberation Mono", monospace;
}
.subgroup {
  height: 24px;
  padding: 0 5px 0 8px;
  justify-content: space-between;
  background: #f0f5f5;
  border: 1px solid #d8dcdc;
  color: #2f86bd;
}
.scrollbar {
  width: 15px;
  flex: none;
  display: flex;
  flex-direction: column;
  background: #f0f0f0;
}
.thumb {
  flex: 0 0 75%;
  margin-bottom: auto;
  max-height: 519px;
  background: #a6a6a6;
}
.actions {
  flex: none;
  display: flex;
  justify-content: flex-end;
  gap: 5px;
  padding: 8px 15px 10px;
}
.actions button {
  width: 54px;
  height: 25px;
  background: #c9cacd;
  border: 1px solid #aaa;
}
.actions .ok {
  background: #9fcbea;
  border-color: #4ba6cf;
}

/* operation navigator */
.navigator {
  width: 71px;
  flex: none;
  display: flex;
  flex-direction: column;
  padding: 0 9px 6px 0;
}
.maximize {
  width: 12px;
  height: 11px;
  margin: 10px 7px 7px auto;
  border: 1px solid #000;
  border-top-width: 2px;
}
.tablebox {
  flex: 1;
  min-height: 0;
  overflow: hidden;
  padding: 2px 1px 0 0;
  border: 1px solid #ddd;
  border-width: 1px 1px 0 0;
}
table {
  width: 100%;
  border-collapse: separate;
  border-spacing: 0;
  table-layout: fixed;
}
th, td {
  height: 20px;
  padding: 0 0 0 4px;
  line-height: 19px;
  text-align: left;
  font-weight: normal;
  border-bottom: 1px solid #e4e4e4;
}
th {
  padding-left: 6px;
  background: #f0f0f0;
  border-color: #ccc;
}
th:first-child, td:first-child {
  width: 9px;
  padding: 0;
  border-right: 1px solid #e4e4e4;
}
tbody tr:nth-child(even) {
  background: #f8f8f8;
}
tbody tr.selected {
  background: #3399fb;
  color: #fff;
}
.hscroll {
  height: 18px;
  padding-right: 5px;
  display: flex;
  align-items: center;
  justify-content: flex-end;
  background: #f0f0f0;
  border-right: 1px solid #ddd;
}
.splitter {
  height: 5px;
  margin-top: 1px;
  background: #ddd;
  border: solid #aaa;
  border-width: 1px 0;
}
.pane {
  height: 24px;
  padding-right: 6px;
  justify-content: flex-end;
  border-bottom: 2px solid #ccc;
}

/* graphics window */
.viewport {
  flex: 1;
  min-width: 0;
  position: relative;
  border: 1px solid #fb9d48;
  border-width: 1px 0 1px 1px;
  box-shadow: -1px 0 #8e9094;
  margin-left: 1px;
  background: linear-gradient(#b3b4b6, #c4c5c6 22%, #d9dadb 52%, #e5e6e8 76%, #e6e7e9);
}
.scene {
  width: 100%;
  height: 100%;
}
.viewname {
  position: absolute;
  left: 6px;
  bottom: 1px;
  margin: 0;
  font-size: 13px;
  line-height: 20px;
  color: #f7a05a;
}
.axis {
  font-family: "Liberation Sans", sans-serif;
  font-size: 13px;
}
.red { fill: #d83a44; }
.green { fill: #2f7d3c; }
.blue { fill: #2c50f0; }
.dim { fill: #5a7a5a; }

/* bottom toolbar */
.bottombar {
  flex: none;
  height: 35px;
  border-bottom: 1px solid #aaa;
}
.strip {
  width: 397px;
  height: 34px;
  display: flex;
  align-items: center;
  border: solid #ddd;
  border-width: 1px 1px 0 0;
}
.bb {
  width: 31px;
  height: 30px;
}
.last {
  width: 10px;
  height: 30px;
  padding-top: 12px;
}
.grip {
  width: 3px;
  height: 28px;
  background: repeating-linear-gradient(#ccc 0 2px, transparent 2px 4px) no-repeat 0 0 / 1px 100%;
}
.grip.dark {
  background: repeating-linear-gradient(#999 0 2px, transparent 2px 4px) no-repeat 0 0 / 2px 100%;
}
.rule {
  width: 1px;
  height: 33px;
  margin: 0 5px 0 3px;
  background: #ddd;
}

/* site mark over the window corner */
.brand {
  position: absolute;
  right: 5px;
  bottom: 6px;
  width: 299px;
  height: 97px;
  padding: 2px 0 0 5px;
  display: flex;
  gap: 11px;
  background: #fff;
  color: #41b0ec;
}
.brand-text {
  display: flex;
  flex-direction: column;
  padding-top: 10px;
}
.brand strong {
  font: 900 46px/50px "Noto Sans CJK SC", sans-serif;
}
.brand span {
  font: bold 19px/22px "DejaVu Sans", sans-serif;
}
```
FILE: main.js
```
"use strict";

// operation list rows, the fifth one holds the active tool
const ops = document.getElementById("ops");
for (let i = 0; i < 34; i++) {
  const tr = ops.insertRow();
  tr.insertCell();
  const tool = tr.insertCell();
  if (i === 4) {
    tr.className = "selected";
    tool.textContent = "D8";
  }
}

// one cutting pass per level, from the slanted boundary to the right end
const levels = 49;
let d = "";
for (let i = 1; i < levels; i++) {
  const t = i / levels;
  const slope = 0.16 - 0.0145 * t;
  const xr = 1483 + 27 * t;
  const yr = 245 + 245 * t;
  const xl = (880.9 - yr - xr * slope) / (0.4433 - slope);
  const yl = yr + (xr - xl) * slope;
  d += "M" + xl.toFixed(1) + " " + yl.toFixed(1) + "L" + (xr + 5).toFixed(1) + " " + (yr - 1).toFixed(1);
  if (i % 2) {
    d += "l0.5 5";
  }
}
document.getElementById("passes").setAttribute("d", d);
document.getElementById("passes-dash").setAttribute("d", d);
```
